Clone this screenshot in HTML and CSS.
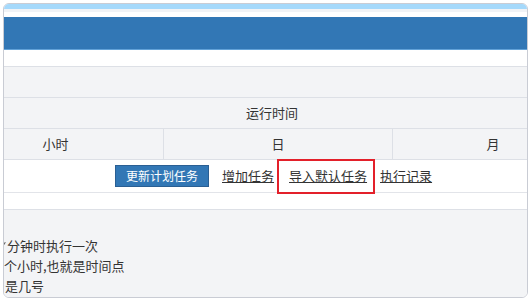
FILE: index.html
```html
<!DOCTYPE html>
<html lang="zh-CN">
<head>
<meta charset="utf-8">
<title>计划任务</title>
<link rel="stylesheet" href="styles.css">
</head>
<body>
<div class="frame">
  <div class="topbar"></div>
  <div class="subbar"></div>
  <div class="header"></div>
  <div class="blank"></div>
  <div class="row gray"></div>
  <div class="row gray title">运行时间</div>
  <div class="row gray cols">
    <div class="cell c1">小时</div>
    <div class="cell c2">日</div>
    <div class="cell c3">月</div>
  </div>
  <div class="actions">
    <button class="btn" type="button">更新计划任务</button>
    <a class="link l1" href="#">增加任务</a>
    <a class="link l2" href="#">导入默认任务</a>
    <a class="link l3" href="#">执行记录</a>
  </div>
  <div class="blank2"></div>
  <div class="notes">
    <div class="line line1"><span class="tick"></span>分钟时执行一次</div>
    <div class="line line2">个小时,也就是时间点</div>
    <div class="line line3">是几号</div>
  </div>
  <div class="highlight"></div>
</div>
</body>
</html>
```
FILE: styles.css
```css
html, body {
  margin: 0;
  padding: 0;
  background: #ffffff;
}
body {
  font-family: "Noto Sans CJK SC", "Noto Sans", sans-serif;
  color: #333333;
  font-size: 13px;
}
.frame {
  position: relative;
  box-sizing: border-box;
  width: 525px;
  height: 295px;
  margin: 3px 0 0 3px;
  border: 1px solid #c9ccd4;
  border-radius: 6px;
  overflow: hidden;
  background: #ffffff;
}
.topbar {
  height: 5px;
  background: #a5d9fb;
}
.subbar {
  height: 3px;
  background: #f1f3f6;
  margin-bottom: 5px;
}
.header {
  height: 32px;
  background: #3277b5;
  border-bottom: 1px solid #62a2d8;
}
.blank {
  height: 16px;
  border-bottom: 1px solid #dde0e6;
}
.row {
  height: 30px;
  border-bottom: 1px solid #dde0e6;
}
.gray {
  background: #f3f4f6;
}
.title {
  display: flex;
  align-items: center;
  justify-content: center;
  padding-left: 13px;
  line-height: 30px;
}
.cols {
  display: grid;
  grid-template-columns: 160px 229px 1fr;
}
.cell {
  line-height: 30px;
  text-align: center;
}
.c1 {
  padding-right: 56px;
  border-right: 1px solid #dde0e6;
}
.c2 {
  border-right: 1px solid #dde0e6;
}
.c3 {
  padding-left: 66px;
}
.actions {
  height: 32px;
  display: flex;
  align-items: center;
  padding-left: 111px;
  border-bottom: 1px solid #e2e4e9;
}
.btn {
  box-sizing: border-box;
  height: 22px;
  padding: 0 10px;
  margin: 0;
  border: 1px solid #2a5f93;
  background: #3277b5;
  color: #ffffff;
  font-family: "Noto Sans CJK SC", "Noto Sans", sans-serif;
  font-size: 12px;
  line-height: 20px;
}
.link {
  color: #333333;
  text-decoration: underline;
  font-size: 13px;
  line-height: 18px;
}
.l1 { margin-left: 13px; }
.l2 { margin-left: 15px; }
.l3 { margin-left: 13px; }
.blank2 {
  height: 16px;
  border-bottom: 1px solid #dde0e6;
}
.notes {
  background: #f3f4f6;
  height: 100px;
  padding-top: 26px;
}
.line {
  white-space: nowrap;
  line-height: 20px;
  font-size: 13px;
}
.line1 {
  display: flex;
  align-items: center;
}
.tick {
  width: 1px;
  height: 3px;
  margin: 0 2px 5px 0;
  background: #555555;
  transform: rotate(35deg);
}
.line2 { margin-left: 0; }
.line3 { margin-left: 1px; }
.highlight {
  position: absolute;
  box-sizing: border-box;
  left: 273px;
  top: 155px;
  width: 98px;
  height: 35px;
  border: 2px solid #e3202a;
}
```
